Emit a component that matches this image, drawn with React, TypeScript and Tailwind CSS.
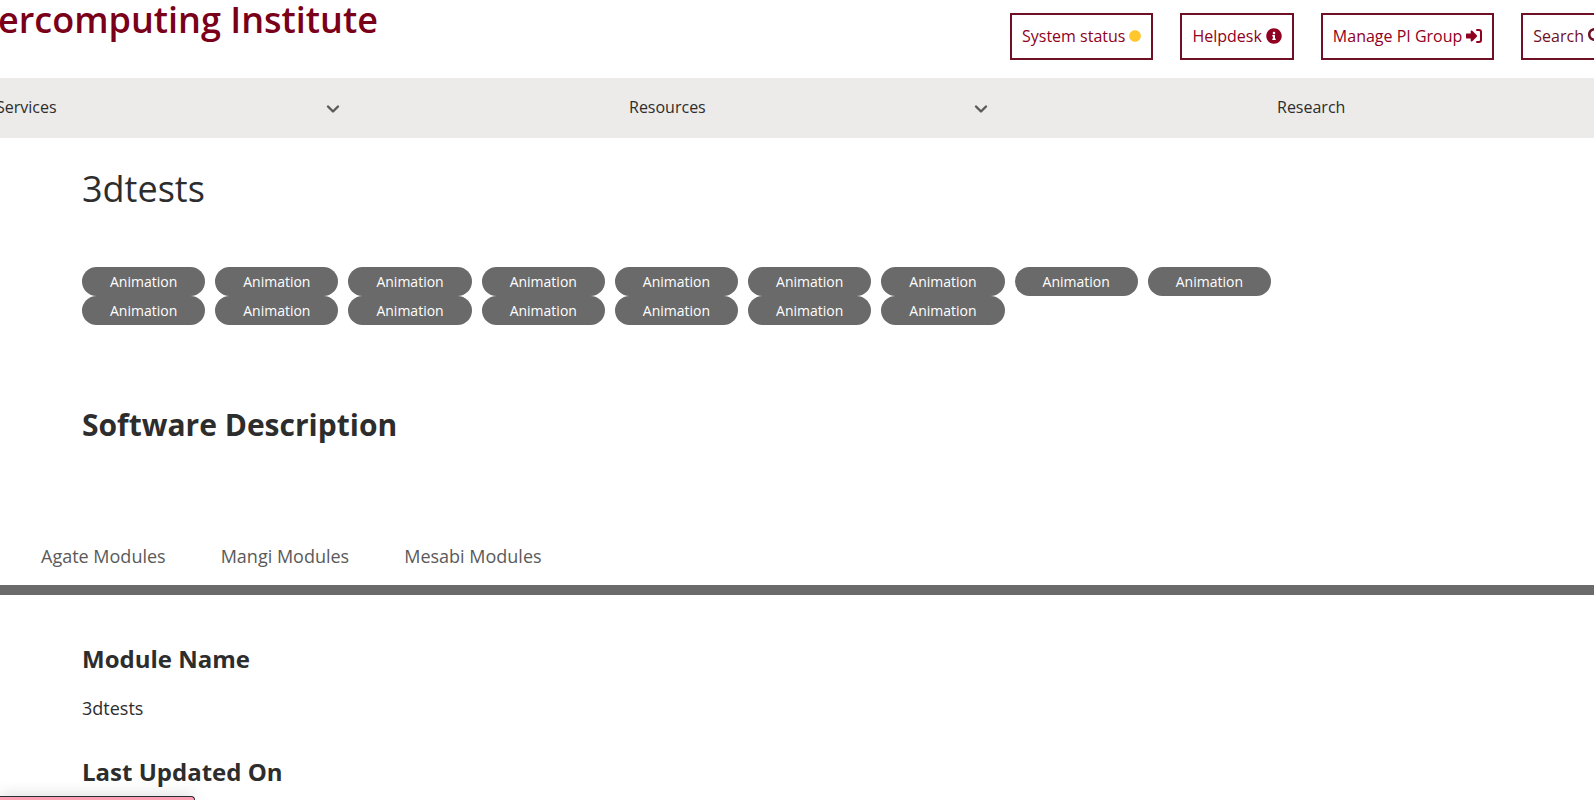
import * as React from 'react';
import { FaCircle, FaInfoCircle, FaSearch } from 'react-icons/fa';

const tags = Array.from({ length: 16 }, () => 'Animation');

const tabs = ['Agate Modules', 'Mangi Modules', 'Mesabi Modules'];

const actionStyles =
  'flex h-[47px] shrink-0 items-center gap-1 border-2 border-[#6f1024] px-[10px] pb-[2px] text-base whitespace-nowrap';

function ChevronDown() {
  return (
    <svg width="14" height="14" viewBox="0 0 14 14" fill="none" aria-hidden="true">
      <path d="M2 5.5l5 5 5-5" stroke="#5a5a5a" strokeWidth="2.4" strokeLinecap="round" strokeLinejoin="round" />
    </svg>
  );
}

function LoginIcon() {
  return (
    <svg width="16" height="16" viewBox="0 0 16 16" aria-hidden="true">
      <path
        d="M1 5.500H4.700V3.500c0-.9 1-1.300 1.600-.7l4.500 4.500c.4.400.4 1 0 1.400l-4.500 4.500c-.6.600-1.600.2-1.600-.7V10.500H1c-.6 0-1-.4-1-1v-3c0-.6.4-1 1-1z"
        fill="currentColor"
      />
      <path d="M11 2h2a2 2 0 0 1 2 2v8a2 2 0 0 1-2 2h-2" fill="none" stroke="currentColor" strokeWidth="2" strokeLinecap="round" />
    </svg>
  );
}

/** Site title and quick links */
function Header() {
  return (
    <header className="flex h-[78px] items-start justify-between">
      <a href="#" className="-ml-[2px] text-4xl leading-10 font-semibold whitespace-nowrap text-[#7a0019]">
        ercomputing Institute
      </a>
      <div className="-mr-[20px] flex gap-[27px] pt-[13px] text-[#900021]">
        <a href="#" className={actionStyles}>
          System status <FaCircle size={12} color="#ffc72c" />
        </a>
        <a href="#" className={actionStyles}>
          Helpdesk <FaInfoCircle size={16} />
        </a>
        <a href="#" className={actionStyles}>
          Manage PI Group <LoginIcon />
        </a>
        <button type="button" className={`${actionStyles} -mr-[2px] text-[#6f1024]`}>
          Search <FaSearch size={16} />
        </button>
      </div>
    </header>
  );
}

interface NavItemProps {
  label: string;
  className?: string;
}

function NavItem({ label, className = '' }: NavItemProps) {
  return (
    <li className={`flex min-w-0 items-center justify-between pr-[289px] ${className}`}>
      <a href="#" className="pb-[3px]">{label}</a>
      <button type="button" aria-label={`Open ${label} menu`}>
        <ChevronDown />
      </button>
    </li>
  );
}

function MainNav() {
  return (
    <nav className="bg-[#ecebea]">
      <ul className="grid h-[60px] grid-cols-[629fr_648fr_317fr] text-base text-[#2d2d2d]">
        <NavItem label="Services" className="-ml-1" />
        <NavItem label="Resources" />
        <li className="flex items-center">
          <a href="#" className="pb-[3px]">Research</a>
        </li>
      </ul>
    </nav>
  );
}

function TagList() {
  return (
    <ul className="grid max-w-[1189px] grid-cols-9 gap-x-[10px]">
      {tags.map((tag, index) => (
        <li key={index}>
          <a
            href="#"
            className="flex h-[29px] items-center justify-center rounded-full bg-[#6a6a6a] text-sm font-medium text-white"
          >
            {tag}
          </a>
        </li>
      ))}
    </ul>
  );
}

function ModuleTabs() {
  return (
    <div role="tablist" className="flex gap-[55px] border-b-[10px] border-[#6a6a6a] px-[41px] text-lg text-[#5a5a5a]">
      {tabs.map((tab) => (
        <button key={tab} type="button" role="tab" className="h-[57px] cursor-pointer pb-[2px]">
          {tab}
        </button>
      ))}
    </div>
  );
}

export default function App() {
  return (
    <div className="h-screen overflow-hidden bg-white font-['Open_Sans',sans-serif] text-[#2d2d2d]">
      <Header />
      <MainNav />

      <main>
        <section className="px-[82px] pt-[26px]">
          <h1 className="text-4xl leading-[50px]">3dtests</h1>
          <div className="pt-[53px]">
            <TagList />
          </div>
          <h2 className="pt-[80px] text-3xl leading-10 font-bold">Software Description</h2>
        </section>

        <div className="pt-[83px]">
          <ModuleTabs />
        </div>

        {/* Module details */}
        <section className="px-[82px] pt-12">
          <h3 className="text-2xl leading-8 font-bold">Module Name</h3>
          <p className="pt-[19px] text-lg leading-7">3dtests</p>
          <h3 className="pt-[34px] text-2xl leading-8 font-bold">Last Updated On</h3>
        </section>
      </main>

      {/* Message panel peeking in from the bottom edge */}
      <div className="fixed bottom-0 left-0 h-1 w-[195px] rounded-tr-sm border-t border-r border-[#2d2d35] bg-[#ff9fb2] shadow-[0_0_14px_rgba(0,0,0,0.3)]" />
    </div>
  );
}
